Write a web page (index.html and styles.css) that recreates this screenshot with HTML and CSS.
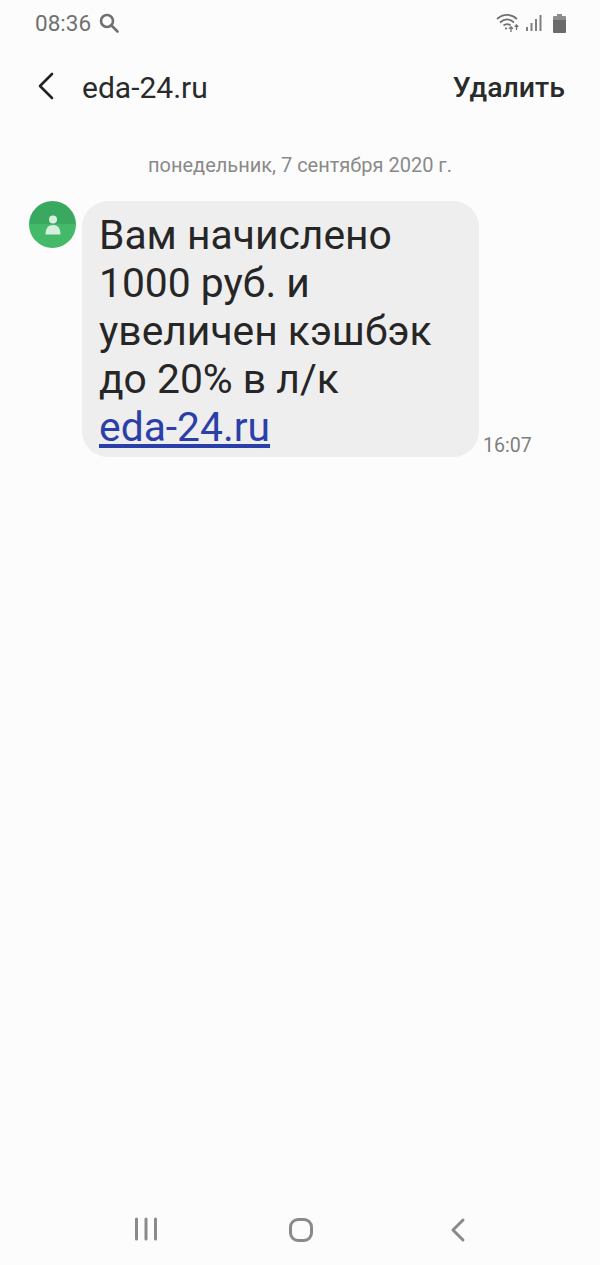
FILE: index.html
```html
<!DOCTYPE html>
<html lang="ru">
<head>
    <meta charset="UTF-8">
    <meta name="viewport" content="width=device-width, initial-scale=1.0">
    <title>eda-24.ru</title>
    <link rel="stylesheet" href="styles.css">
</head>
<body>
<div class="phone">
    <div class="status-bar">
        <div class="status-left">
            <span class="clock">08:36</span>
            <svg class="search-icon" width="22" height="22" viewBox="0 0 22 22" fill="none" stroke="#707070" stroke-width="2.6">
                <circle cx="9" cy="9" r="6"/>
                <path d="M13.5 13.5L19.5 19.5" stroke-linecap="round"/>
            </svg>
        </div>
        <div class="status-right">
            <svg class="wifi-icon" width="24" height="20" viewBox="0 0 24 20" fill="none" stroke="#707070" stroke-width="1.7">
                <path d="M1 6C7 0.5 15 0.5 21 6"/>
                <path d="M4 9.5C8.500 5.500 13.500 5.500 18 9.500"/>
                <path d="M7.500 12.500C10 10.500 12 10.500 14.500 12.500"/>
                <circle cx="10" cy="15.500" r="1.100" fill="#707070" stroke="none"/>
                <path d="M15 14V19M13 15.800L15 13.800L17 15.800M20.500 12V17M18.700 13.800L20.500 12L22.300 13.800" stroke-width="1.300"/>
            </svg>
            <svg class="signal-icon" width="16" height="18" viewBox="0 0 16 18" fill="#808080">
                <rect x="0" y="13" width="2" height="4"/>
                <rect x="4.500" y="9" width="2" height="8"/>
                <rect x="9" y="5" width="2" height="12"/>
                <rect x="13.500" y="1" width="2" height="16"/>
            </svg>
            <svg class="battery-icon" width="13" height="19" viewBox="0 0 13 19">
                <path fill="#8c8c8c" d="M4 0H9V2H12C12.500 2 13 2.500 13 3V6H0V3C0 2.500 0.500 2 1 2H4Z"/>
                <path fill="#6a6a6a" d="M0 6H13V18C13 18.500 12.500 19 12 19H1C0.500 19 0 18.500 0 18Z"/>
            </svg>
        </div>
    </div>

    <div class="app-bar">
        <svg class="back-icon" width="18" height="28" viewBox="0 0 18 28" fill="none" stroke="#222" stroke-width="2.6" stroke-linecap="round" stroke-linejoin="round">
            <path d="M15 2L3 14L15 26"/>
        </svg>
        <span class="contact">eda-24.ru</span>
        <span class="delete">Удалить</span>
    </div>

    <div class="date">понедельник, 7 сентября 2020 г.</div>

    <div class="message">
        <div class="avatar">
            <svg width="16" height="20" viewBox="0 0 16 20" fill="#d5efdc">
                <circle cx="8" cy="4.500" r="4"/>
                <path d="M0.500 19.500C0.500 13 3.500 10 8 10C12.500 10 15.500 13 15.500 19.500Z"/>
            </svg>
        </div>
        <div class="bubble">Вам начислено<br>1000 руб. и<br>увеличен кэшбэк<br>до 20% в л/к<br><a href="#">eda-24.ru</a></div>
        <span class="time">16:07</span>
    </div>

    <div class="nav-bar">
        <svg width="24" height="24" viewBox="0 0 24 24" fill="none" stroke="#8a8a8a" stroke-width="3" stroke-linecap="round">
            <path d="M2.500 2V22M12 2V22M21.500 2V22"/>
        </svg>
        <svg class="nav-home" width="26" height="26" viewBox="0 0 26 26" fill="none" stroke="#8a8a8a" stroke-width="3">
            <rect x="2.500" y="2.500" width="21" height="21" rx="7.500"/>
        </svg>
        <svg width="16" height="26" viewBox="0 0 16 26" fill="none" stroke="#8a8a8a" stroke-width="3" stroke-linecap="round" stroke-linejoin="round">
            <path d="M13 3L3 13L13 23"/>
        </svg>
    </div>
</div>
</body>
</html>
```

FILE: styles.css
```css
body {
    margin: 0;
    background-color: #fcfcfc;
    font-family: Roboto, sans-serif;
}
.phone {
    height: 1265px;
    display: flex;
    flex-direction: column;
    overflow: hidden;
}
.status-bar {
    height: 46px;
    padding: 0 34px 0 35px;
    display: flex;
    justify-content: space-between;
    align-items: center;
}
.status-left {
    display: flex;
    align-items: center;
    gap: 7px;
}
.clock {
    font-size: 22.5px;
    color: #707070;
}
.status-right {
    display: flex;
    align-items: center;
}
.signal-icon {
    margin-left: 6px;
}
.battery-icon {
    margin-left: 11px;
}
.app-bar {
    height: 82px;
    display: flex;
    align-items: center;
    padding: 0 35px 0 37px;
}
.back-icon {
    margin: -3px 27px 0 0;
}
.contact {
    font-size: 30px;
    color: #2a2a2a;
}
.delete {
    margin-left: auto;
    font-size: 28.5px;
    font-weight: 500;
    color: #2a2a2a;
}
.date {
    margin-top: 25px;
    text-align: center;
    font-size: 20px;
    line-height: 24px;
    color: #8a8a8a;
}
.message {
    margin-top: 24px;
    padding-left: 29px;
    display: flex;
    align-items: flex-start;
}
.avatar {
    width: 47px;
    height: 47px;
    border-radius: 50%;
    background: linear-gradient(#38a95f 50%, #45b96a 50%);
    display: flex;
    align-items: center;
    justify-content: center;
    margin-right: 6px;
}
.bubble {
    width: 397px;
    box-sizing: border-box;
    padding: 10px 17px 6px;
    background-color: #eeeeee;
    border-radius: 26px;
    font-size: 40.8px;
    line-height: 48px;
    color: #262626;
}
.bubble a {
    color: #2a40a8;
}
.time {
    align-self: flex-end;
    margin: 0 0 0 4px;
    font-size: 19.6px;
    color: #808080;
}
.nav-bar {
    margin-top: auto;
    height: 48px;
    padding: 0 134px;
    display: flex;
    align-items: flex-start;
}
.nav-home {
    margin: 0 136px 0 130px;
}
```
